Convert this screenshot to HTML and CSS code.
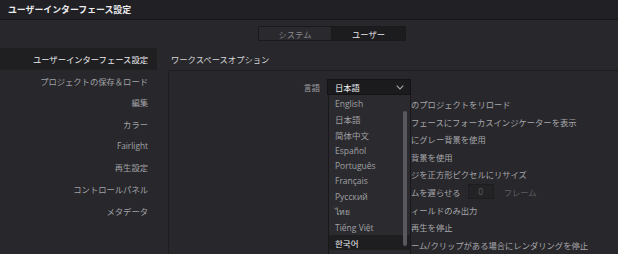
FILE: index.html
```html
<!DOCTYPE html>
<html lang="ja">
<head>
<meta charset="utf-8">
<title>ユーザーインターフェース設定</title>
<link rel="stylesheet" href="styles.css">
</head>
<body>
<div class="window">
  <div class="titlebar">ユーザーインターフェース設定</div>
  <div class="tabs">
    <div class="tab">システム</div>
    <div class="tab active">ユーザー</div>
  </div>
  <div class="content">
    <nav class="sidebar">
      <div class="nav-item active">ユーザーインターフェース設定</div>
      <div class="nav-item">プロジェクトの保存＆ロード</div>
      <div class="nav-item">編集</div>
      <div class="nav-item">カラー</div>
      <div class="nav-item">Fairlight</div>
      <div class="nav-item">再生設定</div>
      <div class="nav-item">コントロールパネル</div>
      <div class="nav-item">メタデータ</div>
    </nav>
    <main class="main">
      <div class="section-title">ワークスペースオプション</div>
      <div class="panel">
        <div class="form-row">
          <div class="label">言語</div>
          <div class="select-wrap">
            <div class="select">
              <span>日本語</span>
              <svg class="chevron" width="8" height="5" viewBox="0 0 8 5"><polyline points="0.7,0.7 4,4 7.3,0.7" fill="none" stroke="#a6a6aa" stroke-width="1.1"/></svg>
            </div>
            <div class="menu">
              <div class="menu-item">English</div>
              <div class="menu-item">日本語</div>
              <div class="menu-item">简体中文</div>
              <div class="menu-item">Español</div>
              <div class="menu-item">Português</div>
              <div class="menu-item">Français</div>
              <div class="menu-item">Русский</div>
              <div class="menu-item">ไทย</div>
              <div class="menu-item">Tiếng Việt</div>
              <div class="menu-item selected">한국어</div>
              <div class="menu-item">Türkçe</div>
              <div class="scrollbar"></div>
            </div>
          </div>
        </div>
        <div class="options">
          <div class="option"><span class="box"></span><span class="opt-label"><span class="pre">起動時に前回使用</span>のプロジェクトをリロード</span></div>
          <div class="option"><span class="box"></span><span class="opt-label"><span class="pre">ユーザーインター</span>フェースにフォーカスインジケーターを表示</span></div>
          <div class="option"><span class="box"></span><span class="opt-label"><span class="pre">シネマビューアー</span>にグレー背景を使用</span></div>
          <div class="option"><span class="box"></span><span class="opt-label"><span class="pre">全画面表示で黒の</span>背景を使用</span></div>
          <div class="option"><span class="box"></span><span class="opt-label"><span class="pre">ビューアでイメー</span>ジを正方形ピクセルにリサイズ</span></div>
          <div class="option"><span class="box"></span><span class="opt-label"><span class="pre">ビデオ出力フレー</span>ムを遅らせる</span><span class="spin">0</span><span class="unit">フレーム</span></div>
          <div class="option"><span class="box"></span><span class="opt-label"><span class="pre">再生中に単一のフ</span>ィールドのみ出力</span></div>
          <div class="option"><span class="box"></span><span class="opt-label"><span class="pre">フレーム落ち時に</span>再生を停止</span></div>
          <div class="option"><span class="box"></span><span class="opt-label"><span class="pre">オフラインのフレ</span>ーム/クリップがある場合にレンダリングを停止</span></div>
        </div>
      </div>
    </main>
  </div>
</div>
</body>
</html>
```

FILE: styles.css
```css
* { box-sizing: border-box; }
html, body {
  margin: 0;
  padding: 0;
  background: #28282c;
}
body {
  width: 618px;
  height: 254px;
  overflow: hidden;
  font-family: "Open Sans", "Noto Sans CJK JP", "Noto Sans CJK KR", sans-serif;
  font-size: 8.3px;
  color: #a4a4a8;
}
.window {
  width: 618px;
  height: 254px;
  display: flex;
  flex-direction: column;
  overflow: hidden;
}
.titlebar {
  height: 20px;
  flex: none;
  padding-left: 8px;
  display: flex;
  align-items: center;
  background: #212125;
  border-bottom: 1px solid #161618;
  color: #ececee;
  font-weight: bold;
  font-size: 8.9px;
}
.tabs {
  flex: none;
  display: flex;
  margin-top: 6px;
  padding-left: 258px;
  height: 15px;
}
.tab {
  width: 74px;
  display: flex;
  align-items: center;
  justify-content: center;
  background: #2a2a2e;
  border: 1px solid #1a1a1d;
  color: #88888d;
}
.tab.active {
  background: #1c1c1f;
  color: #e8e8ea;
  border-left: none;
}
.content {
  flex: 1;
  display: flex;
  margin-top: 7px;
  min-height: 0;
}
.sidebar {
  width: 157px;
  flex: none;
  display: flex;
  flex-direction: column;
}
.nav-item {
  height: 21.7px;
  display: flex;
  align-items: center;
  justify-content: flex-end;
  padding-right: 9px;
  color: #a2a2a6;
}
.nav-item.active {
  background: #1f1f22;
  color: #ececee;
}
.main {
  flex: 1;
  display: flex;
  flex-direction: column;
  padding-left: 11px;
  min-width: 0;
}
.section-title {
  height: 22px;
  flex: none;
  display: flex;
  align-items: center;
  padding-left: 3px;
  color: #d6d6d9;
}
.panel {
  flex: 1;
  border: 1px solid #1d1d20;
  border-right: none;
  border-bottom: none;
  padding-top: 8px;
  display: flex;
  flex-direction: column;
}
.form-row {
  display: flex;
  align-items: center;
  gap: 7px;
  height: 16px;
}
.label {
  width: 151px;
  text-align: right;
  color: #a2a2a6;
}
.select-wrap {
  position: relative;
  width: 84px;
  height: 16px;
}
.select {
  height: 16px;
  display: flex;
  align-items: center;
  justify-content: space-between;
  padding: 0 6px 0 7px;
  background: #1b1b1e;
  border: 1px solid #141416;
  color: #f0f0f2;
}
.chevron { display: block; }
.menu {
  position: absolute;
  top: 16px;
  left: 1px;
  width: 83px;
  height: 175px;
  padding-top: 1.3px;
  background: #2b2b2f;
  border: 1px solid #19191b;
  border-top: none;
  z-index: 2;
}
.menu-item {
  height: 15.4px;
  display: flex;
  align-items: center;
  padding-left: 6px;
  color: #a0a0a4;
  font-size: 8.5px;
}
.menu-item.selected {
  background: #1e1e21;
  color: #eeeef0;
}
.scrollbar {
  position: absolute;
  top: 16px;
  right: 3px;
  width: 4px;
  height: 135px;
  border-radius: 2px;
  background: #58585e;
}
.options {
  display: flex;
  flex-direction: column;
  padding-left: 161px;
  padding-top: 0.2px;
}
.option {
  height: 17.6px;
  display: flex;
  align-items: center;
  white-space: nowrap;
}
.box {
  width: 9px;
  height: 9px;
  margin-left: 4px;
  margin-right: 4px;
  border: 1px solid #18181a;
  background: #1e1e21;
  flex: none;
}
.opt-label {
  color: #a6a6aa;
  white-space: nowrap;
}
.pre {
  display: inline-block;
  width: 64px;
  overflow: hidden;
  vertical-align: top;
  white-space: nowrap;
}
.spin {
  margin-left: 7px;
  width: 26px;
  height: 15px;
  display: flex;
  align-items: center;
  justify-content: center;
  background: #232326;
  border: 1px solid #1d1d20;
  color: #5e5e62;
}
.unit {
  margin-left: 10px;
  color: #5e5e62;
}
```
